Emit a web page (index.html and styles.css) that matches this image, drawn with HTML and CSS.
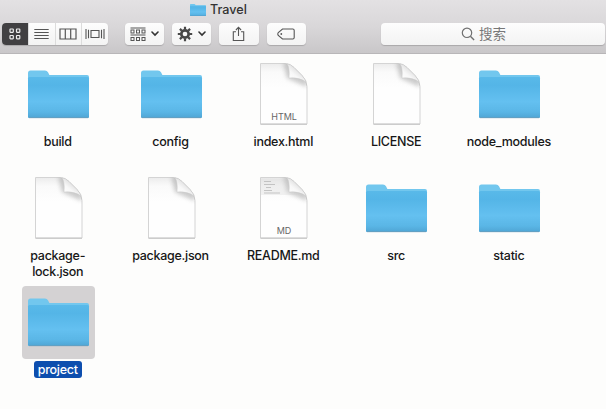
FILE: index.html
```html
<!DOCTYPE html>
<html lang="zh-CN">
<head>
<meta charset="utf-8">
<title>Travel</title>
<link rel="stylesheet" href="styles.css">
</head>
<body>
<svg width="0" height="0" class="defs" aria-hidden="true">
  <defs>
    <linearGradient id="blue" x1="0" y1="0" x2="0" y2="1">
      <stop offset="0" stop-color="#59b9e9"/><stop offset=".2" stop-color="#54b5e7"/><stop offset=".6" stop-color="#64c0f0"/><stop offset=".85" stop-color="#5ab6e6"/><stop offset="1" stop-color="#4fa5d4"/>
    </linearGradient>
    <linearGradient id="paper" x1="0" y1="0" x2="0" y2="1">
      <stop offset="0" stop-color="#ececec"/><stop offset=".14" stop-color="#fafafa"/><stop offset=".4" stop-color="#fefefe"/>
    </linearGradient>
    <linearGradient id="curl" x1="0" y1="1" x2=".6" y2=".3">
      <stop offset="0" stop-color="#fff"/><stop offset=".6" stop-color="#f8f8f8"/><stop offset="1" stop-color="#dedede"/>
    </linearGradient>
    <filter id="soft" x="-50%" y="-50%" width="200%" height="200%"><feGaussianBlur stdDeviation="2"/></filter>
    <clipPath id="sheet"><path d="M13.500 5.500h24.500q5 0 9 4l8 8q5 5 5 11v37.500h-46.500z"/></clipPath>
    <symbol id="folder" viewBox="0 0 73 73">
      <path d="M6 15q0-2.500 2.500-2.500h14.500q2 0 3 1.800l1.400 2.700h37.600q2 0 2 2v39.500q0 1.500-1.500 1.500h-58q-1.500 0-1.500-1.500z" fill="#72c7ee"/>
      <path d="M6 20.500q0-1.500 1.500-1.500h58q1.500 0 1.500 1.500v38q0 1.500-1.500 1.500h-58q-1.500 0-1.500-1.500z" fill="url(#blue)"/>
      <path d="M7 59.700h59" stroke="#6d9db9" stroke-width=".8"/>
    </symbol>
    <symbol id="doc" viewBox="0 0 73 73">
      <path d="M13.500 5.500h24.500q5 0 9 4l8 8q5 5 5 11v37.500h-46.500z" fill="url(#paper)" stroke="#d4d4d4" stroke-width="1"/>
      <path d="M13.500 66.200h46.500" stroke="#c0c0c0" stroke-width="1"/>
      <g clip-path="url(#sheet)"><path d="M36 4l4 16 20 9V19L46 4z" fill="#999" opacity=".5" filter="url(#soft)"/></g>
      <path d="M40 5.800q3 4 2 14.200 10-1 17 4-1-3-4-6.500l-8-8q-3-3-7-3.700z" fill="url(#curl)" stroke="#cacaca" stroke-width=".5"/>
    </symbol>
  </defs>
</svg>
<header class="bar">
  <div class="title">
    <svg class="title-icon" viewBox="6 12 61 48.500" preserveAspectRatio="none"><use href="#folder" width="73" height="73"/></svg>
    <span>Travel</span>
  </div>
  <div class="tools">
    <div class="views">
      <span class="view on"><svg width="12" height="12" viewBox="0 0 12 12"><g fill="none" stroke="#eee" stroke-width="1.200"><rect x="1" y="1" width="3.300" height="3.300" rx=".5"/><rect x="7.500" y="1" width="3.300" height="3.300" rx=".5"/><rect x="1" y="7.500" width="3.300" height="3.300" rx=".5"/><rect x="7.500" y="7.500" width="3.300" height="3.300" rx=".5"/></g></svg></span>
      <span class="view"><svg width="15" height="12" viewBox="0 0 15 12"><path d="M.3 1.500h14.400M.3 4.500h14.400M.3 7.500h14.400M.3 10.500h14.400" stroke="#555" stroke-width="1.100"/></svg></span>
      <span class="view"><svg width="18" height="12" viewBox="0 0 18 12"><path d="M1 1h16v10H1zM6.300 1v10M11.700 1v10" fill="none" stroke="#555" stroke-width="1.200"/></svg></span>
      <span class="view"><svg width="20" height="12" viewBox="0 0 20 12"><path d="M1 1v10M3.500 1.800v8.400M6 2.500h8v7H6zM16.500 1.800v8.400M19 1v10" fill="none" stroke="#555" stroke-width="1.100"/></svg></span>
    </div>
    <div class="button">
      <svg width="16" height="15" viewBox="0 0 16 15"><g fill="none" stroke="#555" stroke-width="1"><path d="M.5 1h15M.5 8h15"/><rect x="1" y="3" width="3" height="3"/><rect x="6.500" y="3" width="3" height="3"/><rect x="12" y="3" width="3" height="3"/><rect x="1" y="10.500" width="3" height="3"/><rect x="6.500" y="10.500" width="3" height="3"/><rect x="12" y="10.500" width="3" height="3"/></g></svg>
      <svg width="8" height="6" viewBox="0 0 8 6"><path d="M1 1l3 3 3-3" fill="none" stroke="#333" stroke-width="1.600" stroke-linecap="round"/></svg>
    </div>
    <div class="button">
      <svg width="16" height="16" viewBox="-8 -8 16 16"><g stroke="#484848"><circle r="3.700" fill="none" stroke-width="2.700"/><path d="M0-4.500v-2.700M0 4.500v2.700M-4.500 0h-2.700M4.500 0h2.700M3.200-3.200l1.900-1.900M-3.200-3.200l-1.900-1.900M3.200 3.200l1.900 1.900M-3.200 3.200l-1.900 1.900" stroke-width="2.200"/></g></svg>
      <svg width="8" height="6" viewBox="0 0 8 6"><path d="M1 1l3 3 3-3" fill="none" stroke="#333" stroke-width="1.600" stroke-linecap="round"/></svg>
    </div>
    <div class="button">
      <svg width="13" height="16" viewBox="0 0 13 16"><path d="M4 5.800H1.300v8.700h10.400V5.800H9M6.500 10V1.500M3.900 4l2.600-2.600L9.100 4" fill="none" stroke="#555" stroke-width="1.100"/></svg>
    </div>
    <div class="button">
      <svg width="18" height="12" viewBox="0 0 18 12"><path d="M5.500 1h10.300q1.400 0 1.400 1.400v7.200q0 1.400-1.400 1.400H5.500L1.300 7.500Q.3 6 1.300 4.500z" fill="none" stroke="#555" stroke-width="1.100"/><circle cx="4.300" cy="6" r=".9" fill="#555"/></svg>
    </div>
    <div class="search">
      <svg width="14" height="14" viewBox="0 0 14 14"><circle cx="6" cy="5.800" r="4.700" fill="none" stroke="#707070" stroke-width="1.200"/><path d="M9.400 9.300l3.700 3.700" stroke="#707070" stroke-width="1.400"/></svg>
      <span>搜索</span>
    </div>
  </div>
</header>
<main class="files">
  <div class="file"><svg class="icon"><use href="#folder"/></svg><span class="name">build</span></div>
  <div class="file"><svg class="icon"><use href="#folder"/></svg><span class="name">config</span></div>
  <div class="file"><svg class="icon"><use href="#doc"/><text class="kind" x="37" y="62">HTML</text></svg><span class="name">index.html</span></div>
  <div class="file"><svg class="icon"><use href="#doc"/></svg><span class="name">LICENSE</span></div>
  <div class="file"><svg class="icon"><use href="#folder"/></svg><span class="name">node_modules</span></div>
  <div class="file"><svg class="icon"><use href="#doc"/></svg><span class="name">package-<br>lock.json</span></div>
  <div class="file"><svg class="icon"><use href="#doc"/></svg><span class="name">package.json</span></div>
  <div class="file"><svg class="icon"><use href="#doc"/><path d="M14 6.500h24q4 5 3.500 13l9 3.500H14z" fill="#ccc" opacity=".25"/><path d="M17 9.500h7M17 12.500h11M19 15.500h5M17 18.500h8M17 21h16" stroke="#aaa" stroke-width=".9" opacity=".7"/><text class="kind" x="37" y="62">MD</text></svg><span class="name">README.md</span></div>
  <div class="file"><svg class="icon"><use href="#folder"/></svg><span class="name">src</span></div>
  <div class="file"><svg class="icon"><use href="#folder"/></svg><span class="name">static</span></div>
  <div class="file selected"><svg class="icon"><use href="#folder"/></svg><span class="name">project</span></div>
</main>
</body>
</html>
```
FILE: styles.css
```css
* { box-sizing: border-box; }
body {
  margin: 0;
  height: 409px;
  overflow: hidden;
  background: #fdfdfc;
  font-family: Inter, "Noto Sans CJK SC", sans-serif;
  color: #171717;
}
.defs { position: absolute; }
svg { display: block; flex: none; }
.bar {
  height: 54px;
  background: linear-gradient(#e3e1e3, #d9d7d9 50%, #c9c7c9);
  border-bottom: 1px solid #b8b6b8;
}
.title {
  display: flex;
  align-items: center;
  gap: 4px;
  height: 19px;
  padding-left: 190px;
  font-size: 12.6px;
  font-weight: 500;
  color: #333;
}
.title-icon { width: 16px; height: 12px; }
.tools {
  display: flex;
  gap: 8px;
  padding: 4px 1px 0 2px;
}
.views, .button, .search {
  height: 22px;
  border-radius: 4px;
  background: linear-gradient(#fdfdfd, #f3f3f3);
  box-shadow: 0 1px 1px #aaa8aa;
}
.views {
  display: flex;
  width: 106px;
  margin-right: 9px;
  overflow: hidden;
}
.view {
  display: flex;
  flex: 1;
  align-items: center;
  justify-content: center;
  border-left: 1px solid #dcdcdc;
}
.view.on { background: #414042; border: 0; }
.button {
  display: flex;
  align-items: center;
  justify-content: center;
  gap: 5px;
  width: 39.2px;
}
.search {
  display: flex;
  align-items: center;
  justify-content: center;
  gap: 4px;
  width: 224px;
  margin-left: auto;
  padding-right: 19px;
  font-size: 13.5px;
  line-height: 20px;
  color: #777;
}
.files {
  display: grid;
  grid-template-columns: repeat(5, 112.8px);
  grid-auto-rows: 114px;
  padding: 4px 0 0 2px;
}
.file {
  display: flex;
  flex-direction: column;
  align-items: center;
}
.icon { width: 73px; height: 73px; border-radius: 4px; }
.name {
  margin: 3px 1.4px 0 0;
  padding: 0 4px;
  border-radius: 3px;
  font-size: 12.5px;
  font-weight: 500;
  line-height: 16px;
  letter-spacing: -.28px;
  text-align: center;
}
.kind {
  font-size: 9px;
  letter-spacing: -.1px;
  text-anchor: middle;
  fill: #666;
}
.selected .icon { background: #d4d2d3; }
.selected .name { margin-top: 2px; padding-top: 1px; background: #0d4eae; color: #fff; }
```
